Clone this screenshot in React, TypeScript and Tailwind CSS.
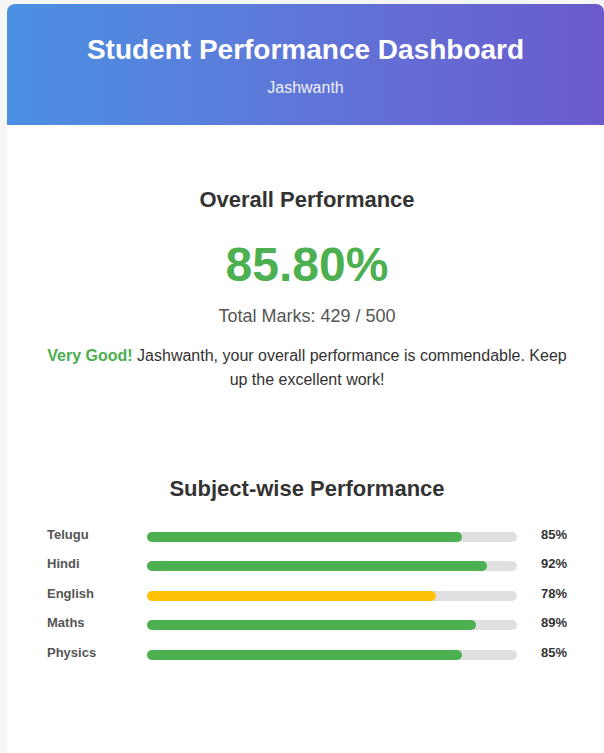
import React from "react";

const subjects = [
  { name: "Telugu", pct: 85, color: "bg-[#4caf50]" },
  { name: "Hindi", pct: 92, color: "bg-[#4caf50]" },
  { name: "English", pct: 78, color: "bg-[#ffc107]" },
  { name: "Maths", pct: 89, color: "bg-[#4caf50]" },
  { name: "Physics", pct: 85, color: "bg-[#4caf50]" },
];

export default function App() {
  return (
    <div
      className="min-h-[753px] bg-[#f4f7f6] pl-[7px] pt-[4px]"
      style={{ fontFamily: '"Liberation Sans", Arial, sans-serif' }}
    >
      <div className="w-[597px] min-h-[749px] rounded-t-[8px] bg-white overflow-hidden">
        <div className="h-[121px] bg-gradient-to-r from-[#4a90e2] to-[#6a5acd] pt-[30px] text-center text-white">
          <h1 className="text-[28px] font-bold leading-[32px]">Student Performance Dashboard</h1>
          <p className="mt-[13px] text-[16px] leading-[18px] opacity-90">Jashwanth</p>
        </div>
        <div className="pl-10 pr-[37px] pt-[62px] text-center">
          <h2 className="text-[22px] font-bold leading-[26px] text-[#333]">Overall Performance</h2>
          <div className="mt-[24px] text-[48px] font-bold leading-[56px] text-[#4caf50]">85.80%</div>
          <div className="mt-[12px] text-[18px] leading-[22px] text-[#555]">Total Marks: 429 / 500</div>
          <p className="mt-[17px] text-[16px] leading-[24px] text-[#333]">
            <span className="font-bold text-[#4caf50]">Very Good!</span> Jashwanth, your overall performance is commendable. Keep up the excellent work!
          </p>
          <h2 className="mt-[84px] text-[22px] font-bold leading-[26px] text-[#333]">Subject-wise Performance</h2>
          <div className="mt-[20px] flex flex-col text-left">
            {subjects.map((s) => (
              <div key={s.name} className="flex h-[29.5px] items-center">
                <div className="w-[100px] text-[13px] font-bold leading-[16px] text-[#555] -mt-[4px]">{s.name}</div>
                <div className="h-[10px] flex-1 rounded-[5px] bg-[#e0e0e0]">
                  <div className={`h-[10px] rounded-[5px] ${s.color}`} style={{ width: `${s.pct}%` }} />
                </div>
                <div className="w-[50px] pl-[24px] text-[13px] font-bold leading-[16px] text-[#333] -mt-[4px]">{s.pct}%</div>
              </div>
            ))}
          </div>
        </div>
      </div>
    </div>
  );
}
